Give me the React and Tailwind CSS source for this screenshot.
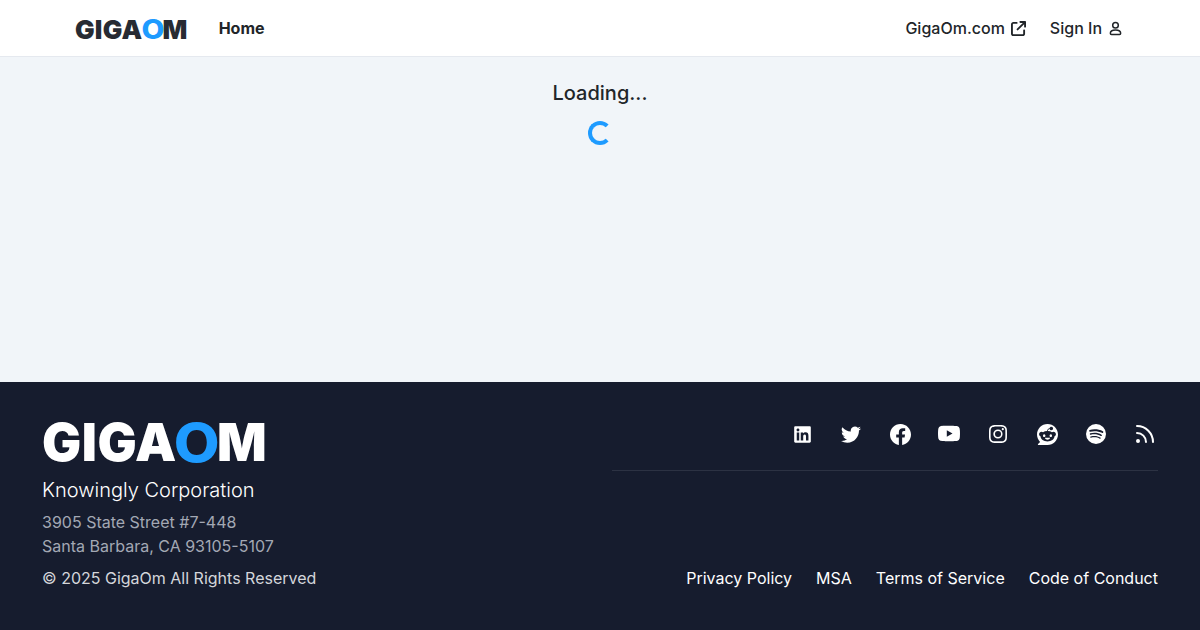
import React from "react";
import { BsTwitter, BsFacebook, BsYoutube, BsInstagram, BsSpotify } from "react-icons/bs";
import { SiReddit } from "react-icons/si";
import { FaLinkedin, FaArrowUpRightFromSquare } from "react-icons/fa6";
import { Rss } from "lucide-react";

function Logo({ dark }) {
  return dark ? (
    <div className="flex items-center h-[40px] text-[52px] leading-none font-black text-white tracking-[0.01em]">
      <span>GIGA</span>
      <span className="w-[40px] flex justify-center shrink-0 font-extrabold text-[#1e9bff] text-[53px] scale-x-[1.12]">O</span>
      <span>M</span>
    </div>
  ) : (
    <div className="flex items-center h-[20px] mt-[3px] text-[26px] leading-none font-black text-[#272b33] tracking-[0.01em]">
      <span>GIGA</span>
      <span className="w-[20px] flex justify-center shrink-0 font-extrabold text-[#1e9bff] text-[26.5px] scale-x-[1.12]">O</span>
      <span>M</span>
    </div>
  );
}

function Person() {
  return (
    <svg viewBox="0 0 16 16" className="w-[15px] h-[15px]" fill="none" stroke="currentColor" strokeWidth="1.6">
      <circle cx="8" cy="4.5" r="3" />
      <path d="M2.5 13c0-2.2 2.3-3.5 5.5-3.5s5.500 1.300 5.500 3.500c0 .8-.5 1.300-1.200 1.300H3.700c-.7 0-1.200-.5-1.200-1.300z" />
    </svg>
  );
}

export default function App() {
  const social = [
    [FaLinkedin, "w-[19px] h-[19px]"],
    [BsTwitter, "w-5 h-5"],
    [BsFacebook, "w-[21px] h-[21px]"],
    [BsYoutube, "w-[22px] h-[22px]"],
    [BsInstagram, "w-[18px] h-[18px]"],
    [SiReddit, "w-[21px] h-[21px]"],
    [BsSpotify, "w-5 h-5"],
    [Rss, "w-6 h-6"],
  ];
  return (
    <div className="flex flex-col h-[630px] bg-[#f1f5f9] font-['Inter',sans-serif] overflow-hidden">
      <header className="h-[57px] shrink-0 bg-white border-b border-[#e5e9ef] flex items-center justify-between pl-[75px] pr-[77px] text-[#212529]">
        <div className="flex items-center gap-[31px]">
          <Logo />
          <span className="text-base font-bold">Home</span>
        </div>
        <div className="flex items-center gap-6 text-base font-medium">
          <span className="flex items-center gap-[6px]">GigaOm.com <FaArrowUpRightFromSquare className="w-[15px] h-[15px]" /></span>
          <span className="flex items-center gap-[6px]">Sign In <Person /></span>
        </div>
      </header>
      <main className="flex-1 flex flex-col items-center pt-[23px]">
        <div className="text-xl leading-[26px] font-medium text-[#212529]">Loading...</div>
        <div className="mt-[15px] w-6 h-6 rounded-full border-4 border-[#1e9bff] border-r-transparent" />
      </main>
      <footer className="h-[248px] shrink-0 bg-[#161c2e] px-[42px] pt-[41px] flex justify-between text-white">
        <div className="flex flex-col">
          <Logo dark />
          <div className="mt-[14px] text-xl leading-[26px] font-light">Knowingly Corporation</div>
          <div className="mt-[7px] text-base leading-6 text-[#a3a8b4]">3905 State Street #7-448<br />Santa Barbara, CA 93105-5107</div>
          <div className="mt-2 text-base leading-6 text-[#d4d6db]">© 2025 GigaOm All Rights Reserved</div>
        </div>
        <div className="w-[546px] flex flex-col">
          <div className="flex justify-end gap-[29px] pr-[3px] pt-px pb-[26px] border-b border-[#2c3243]">
            {social.map(([I, c], i) => (
              <span key={i} className="w-5 h-5 flex items-center justify-center overflow-visible">
                <I className={"shrink-0 " + c} />
              </span>
            ))}
          </div>
          <div className="mt-[95px] flex justify-end gap-6 text-base leading-6">
            <span>Privacy Policy</span><span>MSA</span><span>Terms of Service</span><span>Code of Conduct</span>
          </div>
        </div>
      </footer>
    </div>
  );
}
